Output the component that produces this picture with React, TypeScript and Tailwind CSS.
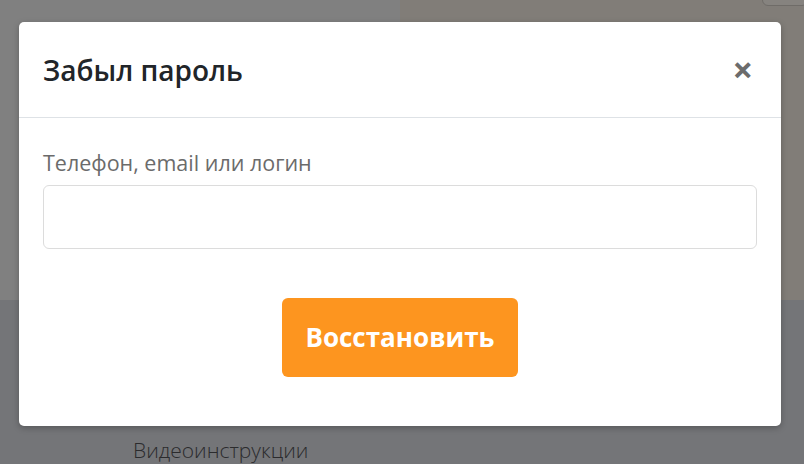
import React from "react";

export default function App() {
  return (
    <div className="relative h-[464px] w-[804px] overflow-hidden font-['Open_Sans',sans-serif]">
      {/* page behind the overlay */}
      <div className="flex h-[300px]">
        <div className="w-[400px] bg-[#808080]" />
        <div className="relative flex-1 bg-[#817d78]">
          <div className="absolute -top-2 right-[-4px] h-[14px] w-[46px] rounded-md border border-[#6f6c68] bg-[#86837f]" />
        </div>
      </div>
      <div className="h-[164px] bg-[#747578] pl-[133px] pt-[140px]">
        <span className="text-[21px] font-light leading-none text-[#2b2b2d]">Видеоинструкции</span>
      </div>

      {/* modal */}
      <div className="absolute left-[19px] top-[22px] flex h-[404px] w-[762px] flex-col rounded-[5px] bg-white shadow-[0_2px_6px_rgba(0,0,0,0.25)]">
        <div className="flex h-[96px] items-center justify-between border-b border-[#dee2e6] pl-[24px] pr-[28px]">
          <h2 className="text-[28px] font-semibold leading-none text-[#212529]">Забыл пароль</h2>
          <button className="text-[36px] font-bold leading-none text-[#6c6c6c]">×</button>
        </div>
        <div className="px-[24px] pt-[34px]">
          <label className="block text-[21.5px] leading-none text-[#6b6b6b]">Телефон, email или логин</label>
          <input
            type="text"
            className="mt-[11px] block h-[64px] w-full rounded-[6px] border border-[#dcdcdc] px-4 outline-none"
          />
        </div>
        <div className="flex justify-center pt-[49px]">
          <button className="h-[79px] w-[236px] rounded-[6px] bg-[#fd951f] text-[26px] font-bold text-white">
            Восстановить
          </button>
        </div>
      </div>
    </div>
  );
}
